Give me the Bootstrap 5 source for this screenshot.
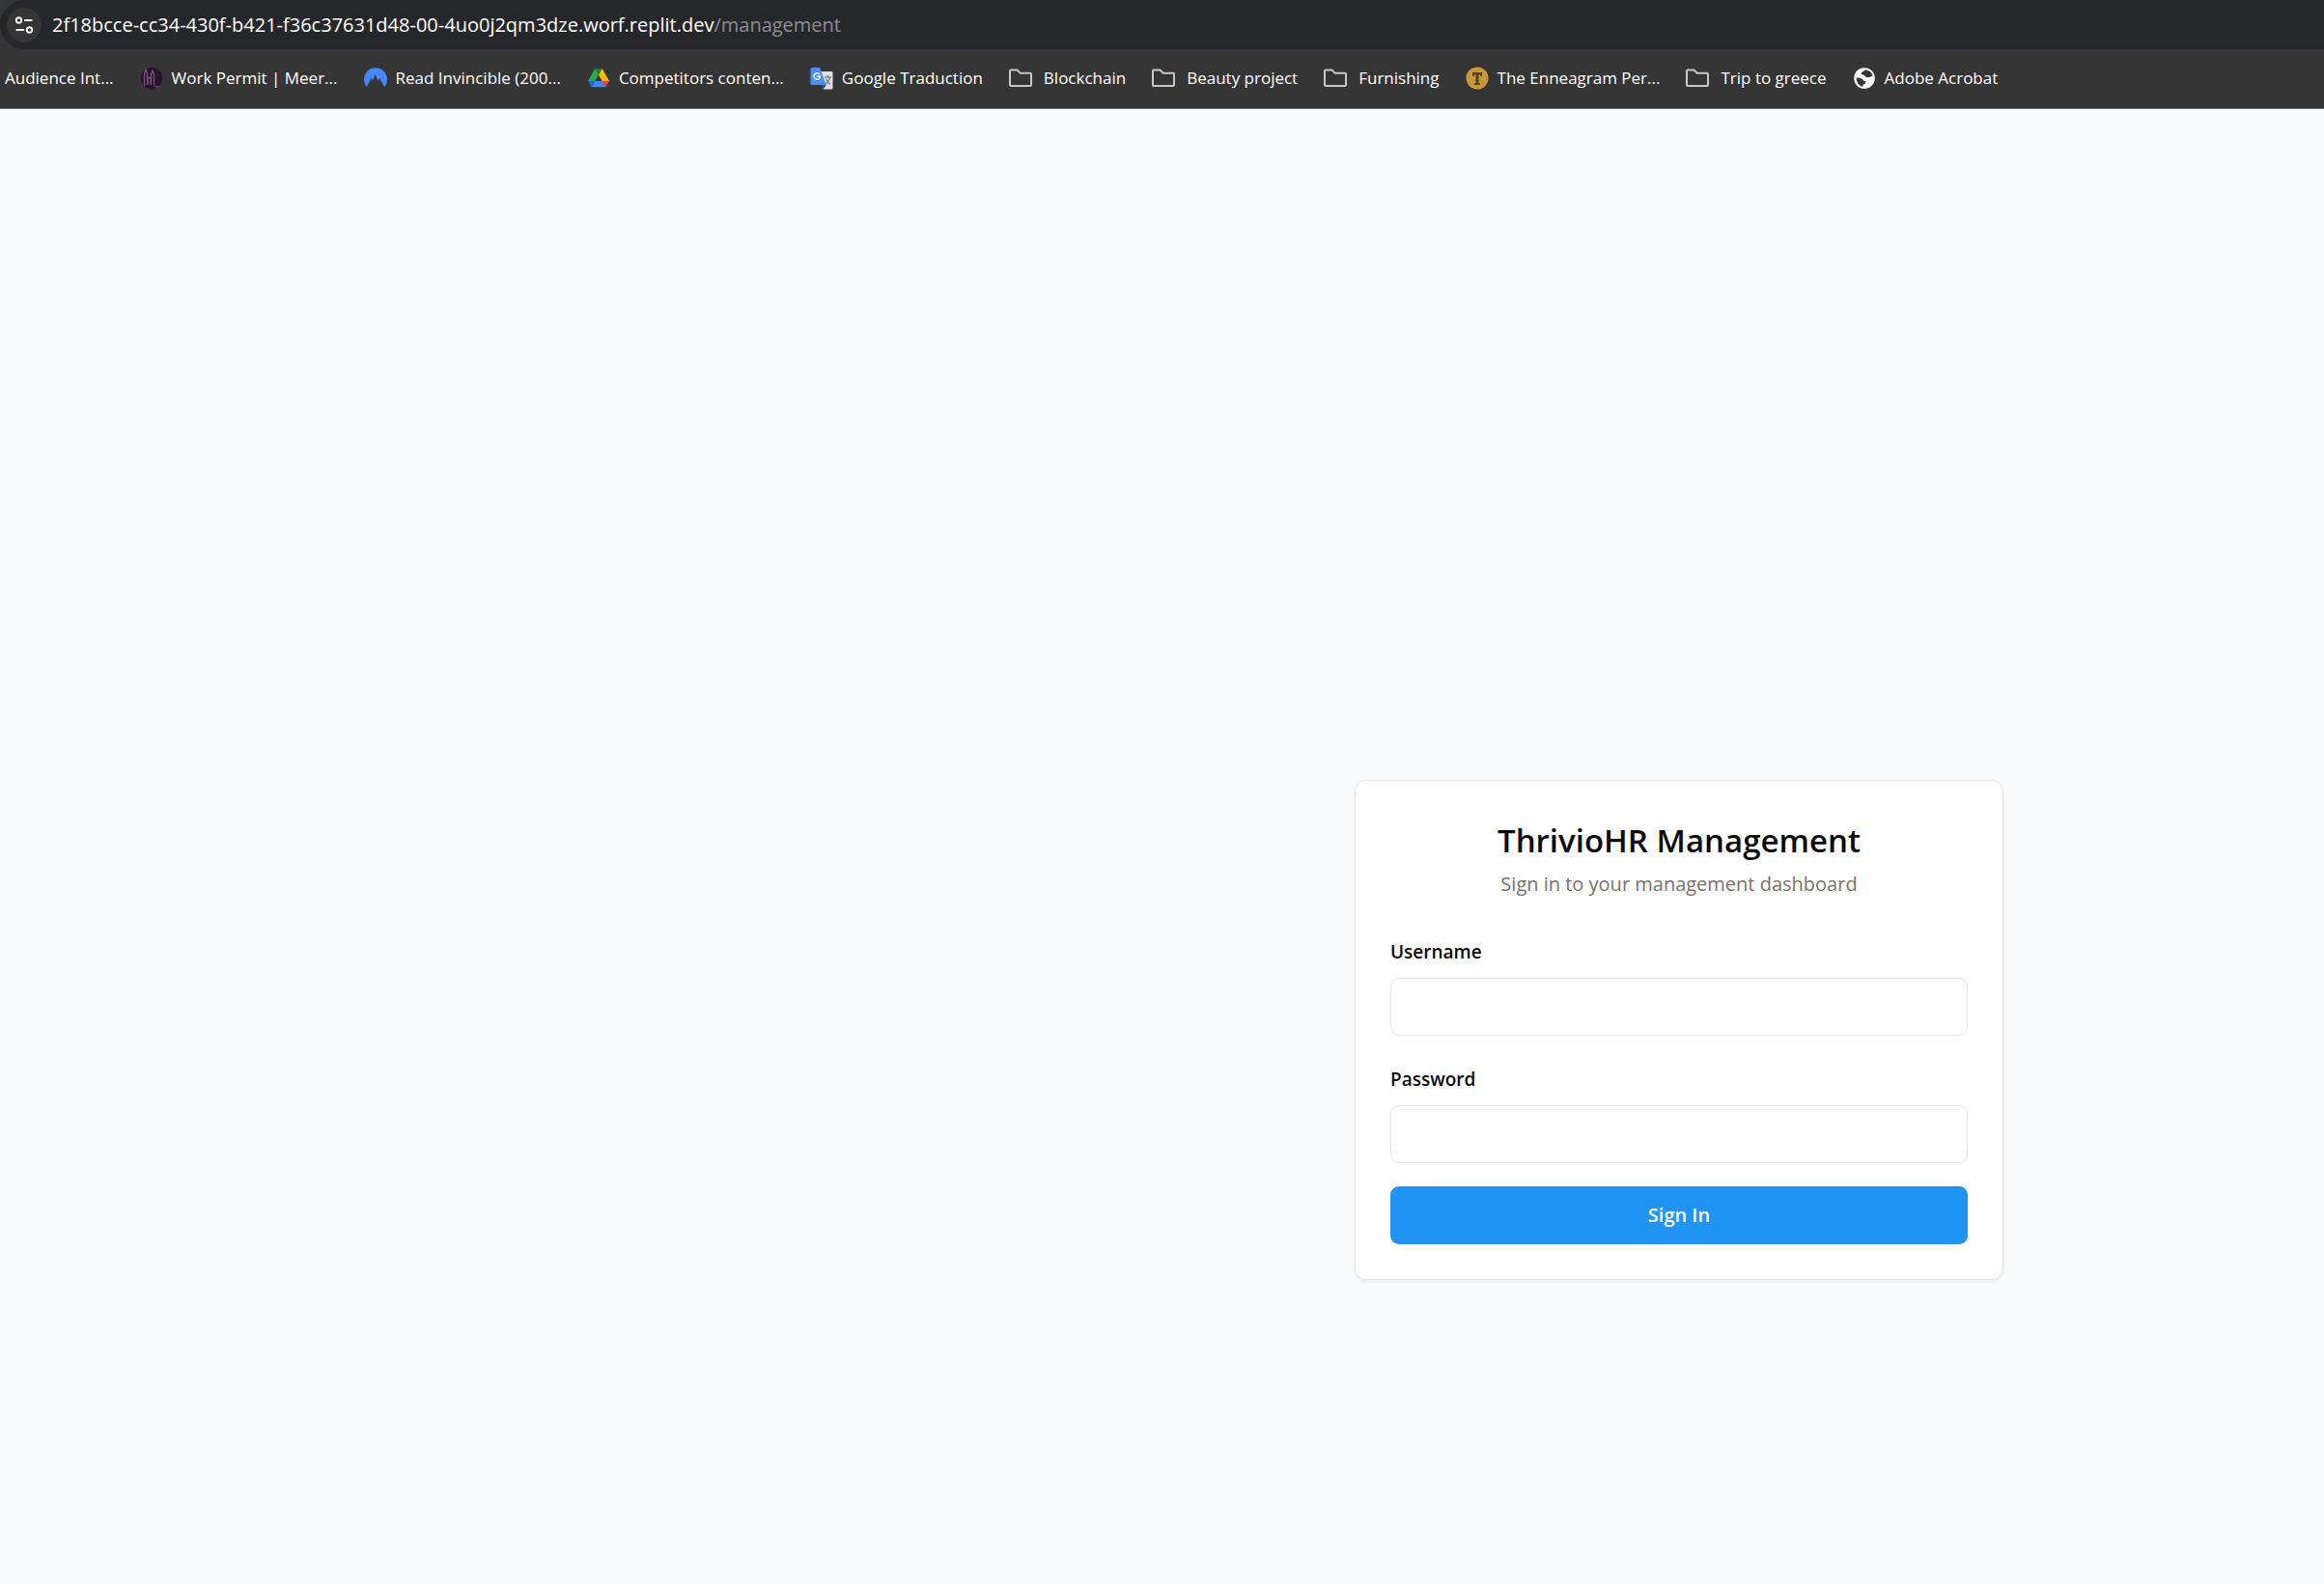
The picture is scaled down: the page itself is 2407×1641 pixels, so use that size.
<!DOCTYPE html>
<html lang="en">
<head>
<meta charset="utf-8">
<meta name="viewport" content="width=device-width, initial-scale=1">
<title>ThrivioHR Management</title>
<link href="https://cdn.jsdelivr.net/npm/bootstrap@5.3.0/dist/css/bootstrap.min.css" rel="stylesheet">
<style>
body { font-family: "Open Sans", "Noto Sans", sans-serif; background: #f9fafc; color: #0c0a09; }
.address-row { background: #353535; }
.address-bar { background: #26272b; height: 51px; border-radius: 26px 0 0 26px; padding-left: 7px; gap: 11px; }
.site-info { width: 36px; height: 36px; background: #353535; border: 0; }
.page-url { font-size: 20px; color: #8b8c8e; }
.page-url span { color: #fff; }
.bookmarks { background: #353535; height: 62px; padding: 0 5px 2px; gap: 27px; border-bottom: 1px solid #6a6a6a; font-size: 17px; }
.bookmark { color: #fff; gap: 9px; line-height: 24px; }
.bookmark svg { width: 24px; height: 24px; }
.bookmark-folder { gap: 12px; }
.login-area { padding: 695px 332px 48px 48px; }
.login-card { width: 672px; border: 1px solid #e5e5e5; border-radius: 12px; box-shadow: 0 2px 3px rgba(0,0,0,.05); padding: 36px; }
.login-header { margin-bottom: 34px; }
.login-title { font-size: 33px; line-height: 52px; font-weight: 600; }
.login-lead { font-size: 20px; line-height: 30px; color: #78716c; }
.login-form { gap: 24px; }
.login-field { gap: 12px; padding-top: 6px; }
.login-field label { font-size: 19px; line-height: 30px; font-weight: 600; }
.login-field .form-control { height: 60px; border-color: #e5e5e5; border-radius: 9px; }
.login-submit { height: 60px; background: #2094f3; color: #fff; border: 0; border-radius: 9px; font-size: 20px; font-weight: 600; }
</style>
<script src="https://cdn.jsdelivr.net/npm/bootstrap@5.3.0/dist/js/bootstrap.bundle.min.js" defer></script>
</head>
<body>
<svg class="d-none" aria-hidden="true">
  <symbol id="folder" viewBox="0 0 24 24"><path d="M2 3.500h6.500l3.200 3.200H22q1 0 1 1V19q0 1-1 1H2q-1 0-1-1V4.500q0-1 1-1z" fill="none" stroke="#c7c7c7" stroke-width="2"/></symbol>
</svg>
<header>
  <div class="address-row">
    <div class="address-bar d-flex align-items-center">
      <button type="button" class="site-info rounded-circle p-0 d-flex align-items-center justify-content-center" aria-label="Site information">
        <svg width="20" height="20" viewBox="0 0 20 20" fill="none" stroke="#f0f0f0" stroke-width="2"><circle cx="4.500" cy="5" r="2.700"/><path d="M10 5h8.500M1.500 15H10"/><circle cx="15.500" cy="15" r="2.700"/></svg>
      </button>
      <div class="page-url text-nowrap"><span>2f18bcce-cc34-430f-b421-f36c37631d48-00-4uo0j2qm3dze.worf.replit.dev</span>/management</div>
    </div>
  </div>
  <nav class="bookmarks d-flex align-items-center text-nowrap overflow-hidden" aria-label="Bookmarks">
    <a class="bookmark text-decoration-none" href="#">Audience Int...</a>
    <a class="bookmark d-flex align-items-center text-decoration-none" href="#"><svg viewBox="0 0 24 24"><circle cx="12" cy="12" r="11.200" fill="#2b1230"/><path d="M4.500 20V7l1.500-4 1.500 4v12M11.500 19V8l1.500-4 1.500 4v11M8 19v-6l1.500-2 1.500 2v6M15 20l2 1h3" fill="none" stroke="#75607a" stroke-width="1.200"/></svg>Work Permit | Meer...</a>
    <a class="bookmark d-flex align-items-center text-decoration-none" href="#"><svg viewBox="0 0 24 24"><path d="M2.800 21A12 12 0 1 1 21.200 21L16 12l-2 2.500L12 8l-3 6-1.500-2z" fill="#4687ff"/></svg>Read Invincible (200...</a>
    <a class="bookmark d-flex align-items-center text-decoration-none" href="#"><svg viewBox="0 0 24 24"><path d="M8.300 2L12 8.400 8.300 15H1z" fill="#2da94f"/><path d="M8.300 2H15.700L12 8.400z" fill="#188038"/><path d="M15.700 2L23 15H15.600L12 8.400z" fill="#ffba00"/><path d="M8.300 15H15.600L19.500 21.300H4.500z" fill="#4587f4"/><path d="M1 15h7.300L4.500 21.300z" fill="#1967d2"/><path d="M15.600 15H23L19.500 21.300z" fill="#ea4335"/></svg>Competitors conten...</a>
    <a class="bookmark d-flex align-items-center text-decoration-none" href="#"><svg viewBox="0 0 24 24"><path d="M11 5H22q1.500 0 1.500 1.500V22q0 1.500-1.500 1.500H14z" fill="#dedede"/><path d="M12 19h5l-3.500 4.500z" fill="#3049b0"/><path d="M2 1h8l1.500 4L16.500 19H2q-1.500 0-1.500-1.500V2.500Q.5 1 2 1z" fill="#4e8df5"/><path d="M15 11h7M18.500 9v2M20.500 11q-1 5-5 7M16.500 13q1.500 4 4.500 5.500" fill="none" stroke="#70878f" stroke-width="1.300"/><path d="M9.500 7.800A3.200 3.200 0 1 0 10.400 10H7.300" fill="none" stroke="#fff" stroke-width="1.500"/></svg>Google Traduction</a>
    <a class="bookmark bookmark-folder d-flex align-items-center text-decoration-none" href="#"><svg><use href="#folder"/></svg>Blockchain</a>
    <a class="bookmark bookmark-folder d-flex align-items-center text-decoration-none" href="#"><svg><use href="#folder"/></svg>Beauty project</a>
    <a class="bookmark bookmark-folder d-flex align-items-center text-decoration-none" href="#"><svg><use href="#folder"/></svg>Furnishing</a>
    <a class="bookmark d-flex align-items-center text-decoration-none" href="#"><svg viewBox="0 0 24 24"><circle cx="12" cy="12" r="11.500" fill="#c9963a"/><path d="M7 6h10v4h-1.500l-.5-1.500h-1.500V17l1.500.5V19H9v-1.500l1.500-.5V8.500H9L8.500 10H7z" fill="#4d4229"/></svg>The Enneagram Per...</a>
    <a class="bookmark bookmark-folder d-flex align-items-center text-decoration-none" href="#"><svg><use href="#folder"/></svg>Trip to greece</a>
    <a class="bookmark d-flex align-items-center text-decoration-none" href="#"><svg viewBox="0 0 24 24"><circle cx="12" cy="12" r="10.800" fill="#fff"/><path d="M3.500 11.500q4-.5 6.500 1.500 1 2 3.500 2.500l-1 2.500-2 .5V21Q4 19.500 3.500 11.500zM13 3.300q-1 1.500-3 2-2 1.500-1 3 2-.5 3 1 1 2 3.500 2t4-1.500q1 0 1.200 1.500Q20.500 4.500 13 3.300z" fill="#353535"/></svg>Adobe Acrobat</a>
  </nav>
</header>
<main class="login-area d-flex justify-content-end">
  <section class="login-card bg-white">
    <div class="login-header text-center">
      <h1 class="login-title mb-1">ThrivioHR Management</h1>
      <p class="login-lead mb-0">Sign in to your management dashboard</p>
    </div>
    <form class="login-form d-flex flex-column">
      <div class="login-field d-flex flex-column"><label for="username">Username</label><input class="form-control" id="username" type="text"></div>
      <div class="login-field d-flex flex-column"><label for="password">Password</label><input class="form-control" id="password" type="password"></div>
      <button class="login-submit btn w-100" type="submit">Sign In</button>
    </form>
  </section>
</main>
</body>
</html>
